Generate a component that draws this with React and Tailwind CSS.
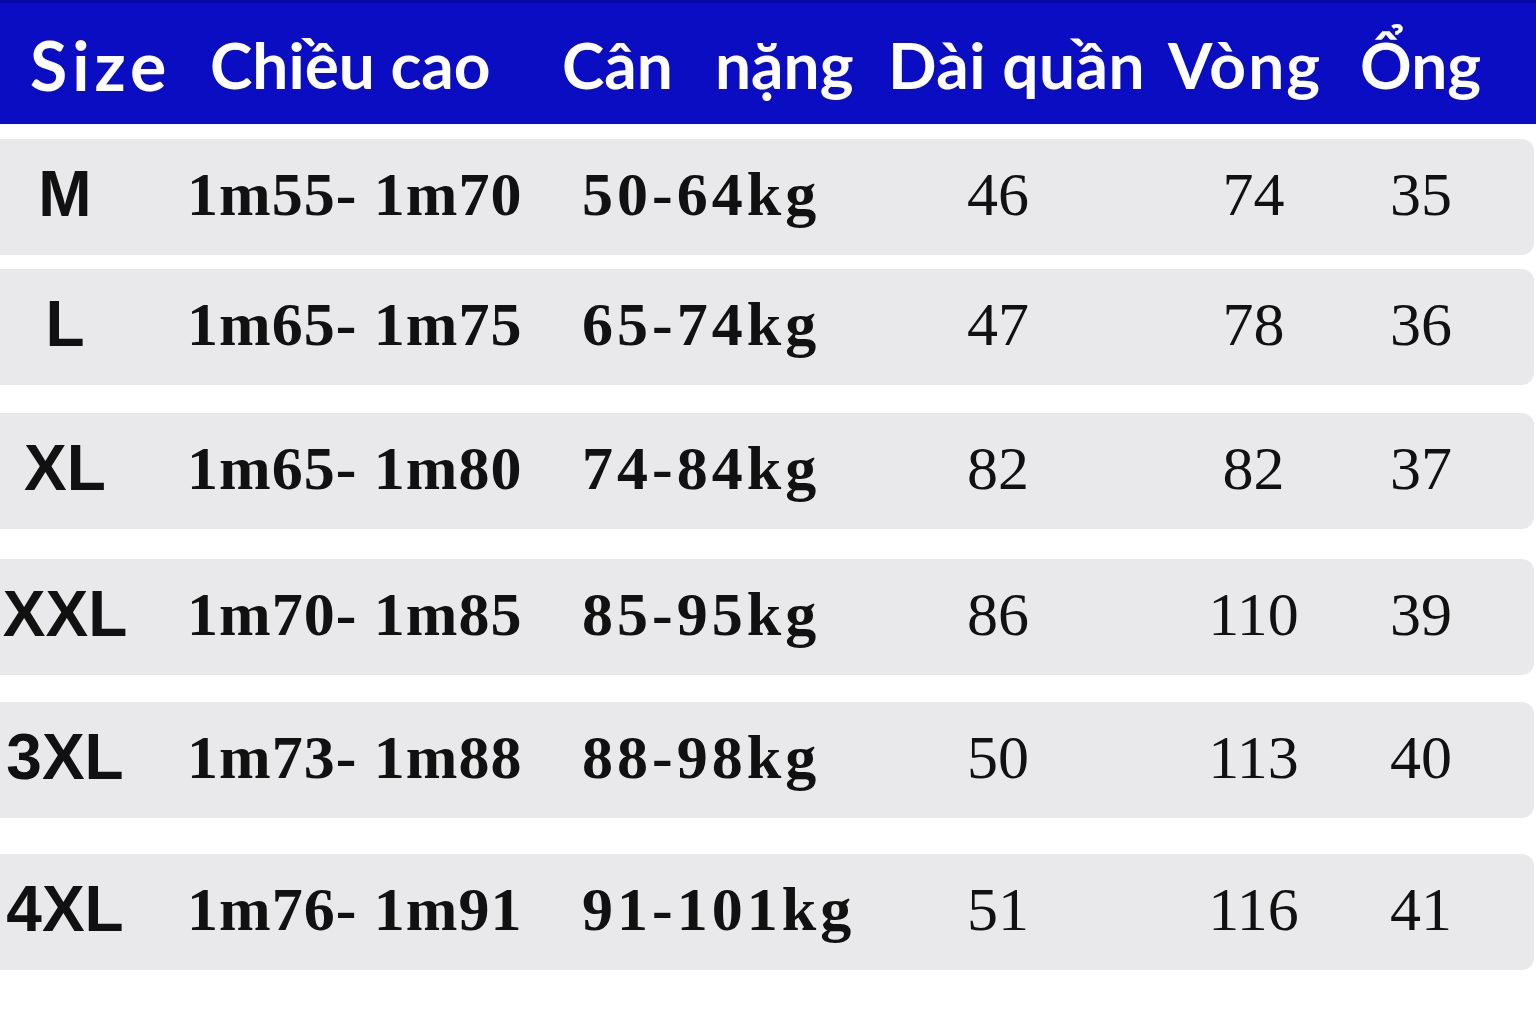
const headers = [
  { label: "Size", w: "w-[180px]", extra: "tracking-[5px] text-[68px]" },
  { label: "Chiều cao", w: "w-[352px]", extra: "text-[64px]" },
  { label: "Cân", w: "w-[153px]", extra: "text-[64px]" },
  { label: "nặng", w: "w-[173px]", extra: "text-[64px]" },
  { label: "Dài quần", w: "w-[280px]", extra: "tracking-[0.5px] text-[64px]" },
  { label: "Vòng", w: "w-[192px]", extra: "tracking-[2px] text-[64px]" },
  { label: "Ổng", w: "w-[150px]", extra: "text-[64px]" },
];

// gap above each row differs in the chart, kept as-is
const rows = [
  { size: "M", height: "1m55- 1m70", weight: "50-64kg", len: "46", waist: "74", leg: "35", gap: "mt-[15px]" },
  { size: "L", height: "1m65- 1m75", weight: "65-74kg", len: "47", waist: "78", leg: "36", gap: "mt-[14px]" },
  { size: "XL", height: "1m65- 1m80", weight: "74-84kg", len: "82", waist: "82", leg: "37", gap: "mt-[28px]" },
  { size: "XXL", height: "1m70- 1m85", weight: "85-95kg", len: "86", waist: "110", leg: "39", gap: "mt-[30px]" },
  { size: "3XL", height: "1m73- 1m88", weight: "88-98kg", len: "50", waist: "113", leg: "40", gap: "mt-[27px]" },
  { size: "4XL", height: "1m76- 1m91", weight: "91-101kg", len: "51", waist: "116", leg: "41", gap: "mt-[36px]" },
];

const serif = "font-['Liberation_Serif',serif] text-[62px] leading-none";

export default function App() {
  return (
    <div className="w-[1536px] h-[1024px] bg-white overflow-hidden text-[#111]">
      <div className="h-[124px] bg-[#0b0dc3] border-t-[3px] border-[#0607a4] flex items-center pl-[30px] pt-[2px]">
        {headers.map((h) => (
          <div
            key={h.label}
            className={`${h.w} ${h.extra} shrink-0 whitespace-nowrap text-white font-bold leading-none font-['Lato',sans-serif]`}
          >
            {h.label}
          </div>
        ))}
      </div>

      {rows.map((r) => (
        <div
          key={r.size}
          className={`${r.gap} mr-[2px] h-[116px] bg-[#e9e9eb] rounded-r-[12px] flex items-center pb-[6px]`}
        >
          <div className="w-[130px] shrink-0 text-center font-bold text-[64px] leading-none font-['Liberation_Sans',sans-serif]">
            {r.size}
          </div>
          <div className={`ml-[57px] w-[395px] shrink-0 whitespace-nowrap font-bold tracking-[1px] ${serif}`}>
            {r.height}
          </div>
          <div className={`w-[385px] shrink-0 whitespace-nowrap font-bold tracking-[4px] ${serif}`}>
            {r.weight}
          </div>
          <div className={`w-[190px] shrink-0 ${serif}`}>{r.len}</div>
          <div className={`w-[193px] shrink-0 text-center ${serif}`}>{r.waist}</div>
          <div className={`ml-[40px] shrink-0 ${serif}`}>{r.leg}</div>
        </div>
      ))}
    </div>
  );
}
